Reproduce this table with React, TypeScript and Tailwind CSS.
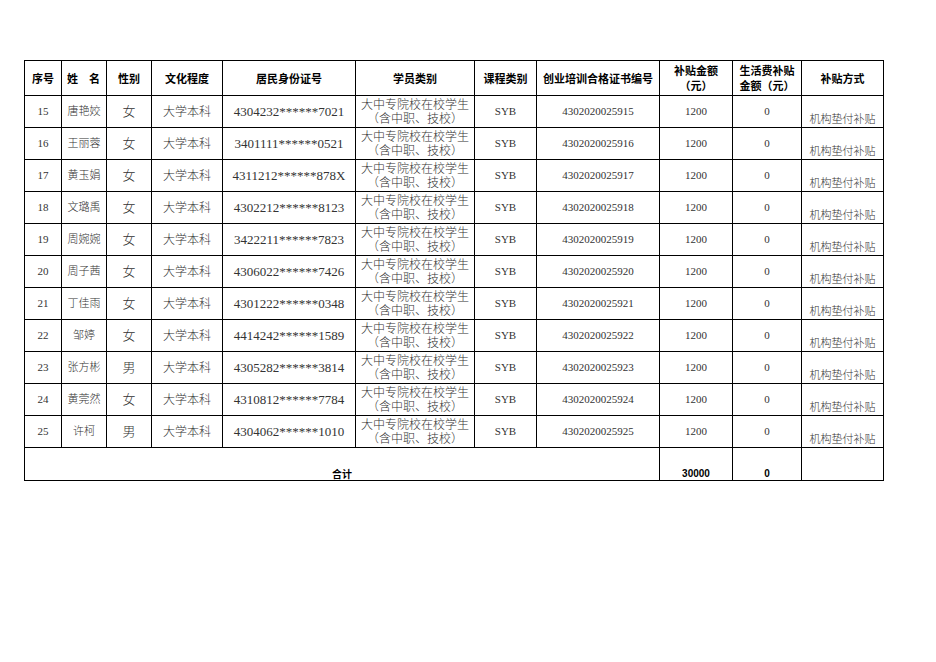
import React from "react";

type Row = {
  no: number;
  name: string;
  sex: string;
  id: string;
  cert: string;
};

const ROWS: Row[] = [
  { no: 15, name: "唐艳姣", sex: "女", id: "4304232******7021", cert: "4302020025915" },
  { no: 16, name: "王丽蓉", sex: "女", id: "3401111******0521", cert: "4302020025916" },
  { no: 17, name: "黄玉娟", sex: "女", id: "4311212******878X", cert: "4302020025917" },
  { no: 18, name: "文璐禹", sex: "女", id: "4302212******8123", cert: "4302020025918" },
  { no: 19, name: "周婉婉", sex: "女", id: "3422211******7823", cert: "4302020025919" },
  { no: 20, name: "周子茜", sex: "女", id: "4306022******7426", cert: "4302020025920" },
  { no: 21, name: "丁佳雨", sex: "女", id: "4301222******0348", cert: "4302020025921" },
  { no: 22, name: "邹婷", sex: "女", id: "4414242******1589", cert: "4302020025922" },
  { no: 23, name: "张方彬", sex: "男", id: "4305282******3814", cert: "4302020025923" },
  { no: 24, name: "黄莞然", sex: "女", id: "4310812******7784", cert: "4302020025924" },
  { no: 25, name: "许柯", sex: "男", id: "4304062******1010", cert: "4302020025925" },
];

const WIDTHS = [37, 45, 45, 71, 133, 119, 62, 123, 73, 69, 82];

const serif = "font-['Liberation_Serif','Noto_Sans_CJK_SC',serif]";
const sans = "font-['Noto_Sans_CJK_SC','Liberation_Sans',sans-serif]";

// base cell: no vertical alignment here so each cell can pick its own
const cell = "border border-black p-0 text-center";
const mid = `${cell} align-middle`;
const bot = `${cell} align-bottom`;

export default function App() {
  return (
    <div className="w-[936px] h-[662px] bg-white pt-[60px] pl-[24px]">
      <table className="border-collapse table-fixed w-[859px] border-[1.5px] border-black">
        <colgroup>
          {WIDTHS.map((w, i) => (
            <col key={i} style={{ width: w }} />
          ))}
        </colgroup>
        <thead>
          <tr className={`h-[35px] ${sans} font-bold text-[11px] leading-[15px] text-black`}>
            <th className={mid}>序号</th>
            <th className={`${mid} text-left pl-[5px]`}>姓　名</th>
            <th className={mid}>性别</th>
            <th className={mid}>文化程度</th>
            <th className={mid}>居民身份证号</th>
            <th className={mid}>学员类别</th>
            <th className={mid}>课程类别</th>
            <th className={mid}>创业培训合格证书编号</th>
            <th className={mid}>
              补贴金额
              <br />
              （元）
            </th>
            <th className={mid}>
              生活费补贴
              <br />
              金额（元）
            </th>
            <th className={mid}>补贴方式</th>
          </tr>
        </thead>
        <tbody className={`${serif} font-light text-[#333]`}>
          {ROWS.map((r) => (
            <tr key={r.no} className="h-[32px]">
              <td className={`${mid} text-[11px]`}>{r.no}</td>
              <td className={`${mid} text-[11px]`}>{r.name}</td>
              <td className={`${mid} text-[13px]`}>{r.sex}</td>
              <td className={`${mid} text-[12px]`}>大学本科</td>
              <td className={`${mid} text-[13px]`}>{r.id}</td>
              <td className={`${mid} text-[12px] leading-[14px]`}>
                大中专院校在校学生
                <br />
                （含中职、技校）
              </td>
              <td className={`${mid} text-[11px]`}>SYB</td>
              <td className={`${mid} text-[11px]`}>{r.cert}</td>
              <td className={`${mid} text-[11px]`}>1200</td>
              <td className={`${mid} text-[11px]`}>0</td>
              <td className={`${bot} text-[11px] leading-[14px] pb-[1px]`}>机构垫付补贴</td>
            </tr>
          ))}
          <tr className={`h-[33px] ${sans} font-bold text-[10px] text-black`}>
            <td colSpan={8} className={`${bot} leading-[12px]`}>
              合计
            </td>
            <td className={`${bot} leading-[12px] font-['Liberation_Sans',sans-serif]`}>30000</td>
            <td className={`${bot} leading-[12px] font-['Liberation_Sans',sans-serif]`}>0</td>
            <td className={mid}></td>
          </tr>
        </tbody>
      </table>
    </div>
  );
}
